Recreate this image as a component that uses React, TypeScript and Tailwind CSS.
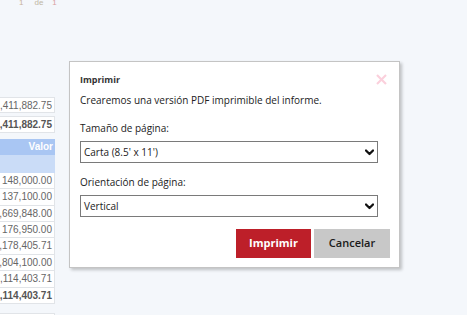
import React from "react";

const dialogFont = "font-['Segoe_UI','Open_Sans',sans-serif]";

function Row({ value, bold = false, first = false }: { value: string; bold?: boolean; first?: boolean }) {
  return (
    <div
      className={`h-[16.4px] bg-white border-x border-b border-[#e1e4e8] ${first ? "border-t" : ""} text-right pr-[2px] text-[10px] leading-[15px] whitespace-nowrap ${
        bold ? "font-bold text-[#555]" : "text-[#666]"
      }`}
    >
      {value}
    </div>
  );
}

function Chevron() {
  return (
    <svg width="9" height="7" viewBox="0 0 9 7" className="shrink-0">
      <polyline points="1,1.5 4.5,5 8,1.5" fill="none" stroke="#111" strokeWidth="2.3" strokeLinecap="round" strokeLinejoin="round" />
    </svg>
  );
}

function Select({ value }: { value: string }) {
  return (
    <div className="w-[298px] h-[22px] border border-[#7a7a7a] bg-white flex items-center justify-between pl-[3px] pr-[3px]">
      <span className="text-[10px] leading-[14px] text-[#222]">{value}</span>
      <Chevron />
    </div>
  );
}

export default function App() {
  return (
    <div className="relative w-[467px] h-[315px] overflow-hidden bg-[#f4f7fb] font-['Liberation_Sans',Arial,sans-serif]">
      <div className="flex items-center h-[8px] mt-[-1px] text-[8px] leading-[8px]">
        <span className="ml-[19px] text-[#c8b39a]">1</span>
        <span className="ml-[11px] text-[#c0b6a4]">de</span>
        <span className="ml-[9px] text-[#d8a2a2]">1</span>
      </div>

      <div className="ml-[-45px] w-[100px] mt-[90px] flex flex-col">
        <Row value="1,411,882.75" first />
        <div className="h-[3px]" />
        <Row value="1,411,882.75" bold first />
        <div className="h-[6px]" />
        <div className="h-[16px] bg-[#a9c6f3] text-right pr-[2px] text-[10px] leading-[16px] font-bold text-white">Valor</div>
        <div className="h-[18px] bg-[#cadcf7]" />
        <Row value="148,000.00" />
        <Row value="137,100.00" />
        <Row value="1,669,848.00" />
        <Row value="176,950.00" />
        <Row value="1,178,405.71" />
        <Row value="1,804,100.00" />
        <Row value="1,114,403.71" />
        <Row value="1,114,403.71" bold />
        <div className="h-[9px]" />
        <Row value="" first />
      </div>

      <div
        className={`absolute left-[69px] top-[61px] w-[331px] h-[207px] bg-white border border-[#c4c4c4] shadow-[2px_2px_3px_rgba(0,0,0,0.22)] ${dialogFont} text-[#222]`}
      >
        <div className="relative pl-[10px] pt-[11px]">
          <div className="text-[9px] leading-[14px] font-bold text-[#333]">Imprimir</div>
          <svg className="absolute right-[12px] top-[12px]" width="11" height="11" viewBox="0 0 11 11">
            <line x1="1" y1="1" x2="10" y2="10" stroke="#fbd0dc" strokeWidth="2.2" />
            <line x1="10" y1="1" x2="1" y2="10" stroke="#fbd0dc" strokeWidth="2.2" />
          </svg>
          <div className="mt-[5px] text-[10px] leading-[16px]">Crearemos una versión PDF imprimible del informe.</div>
          <div className="mt-[12px] text-[10px] leading-[16px]">Tamaño de página:</div>
          <div className="mt-[5px]">
            <Select value="Carta (8.5' x 11')" />
          </div>
          <div className="mt-[11px] text-[10px] leading-[16px]">Orientación de página:</div>
          <div className="mt-[5px]">
            <Select value="Vertical" />
          </div>
          <div className="mt-[12px] flex justify-end gap-[3px] mr-[9px]">
            <button className="w-[75px] h-[29px] bg-[#bd1f29] text-white font-bold text-[11px]">Imprimir</button>
            <button className="w-[76px] h-[29px] bg-[#c8c8c8] text-[#1a1a1a] font-semibold text-[11px]">Cancelar</button>
          </div>
        </div>
      </div>
    </div>
  );
}
